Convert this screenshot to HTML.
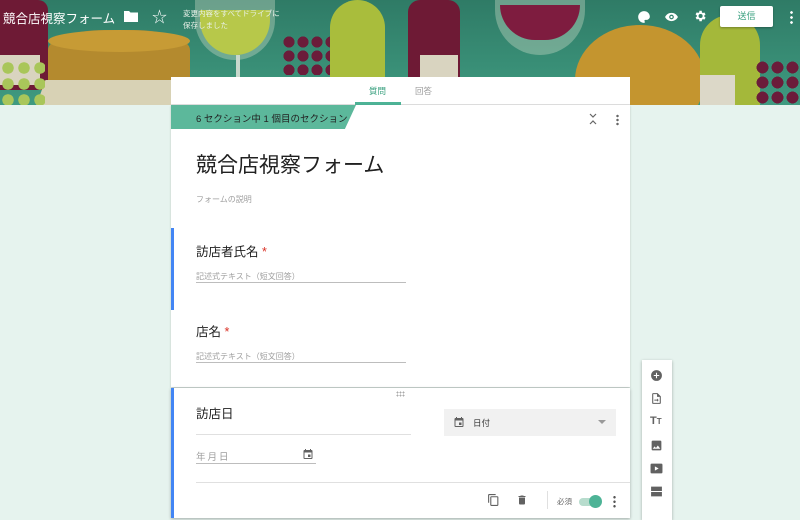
<!DOCTYPE html>
<html><head><meta charset="utf-8"><style>
*{margin:0;padding:0;box-sizing:border-box}
body{width:800px;height:509px;overflow:hidden;background:#e6f3ee;font-family:"Liberation Sans","Noto Sans CJK JP",sans-serif;position:relative}
.hdr{position:absolute;left:0;top:0;width:800px;height:105px;background:linear-gradient(180deg,#2f7b66,#3f9a80);overflow:hidden}
.abs{position:absolute}
.card{position:absolute;background:#fff;left:171px;width:459px}
.ic{fill:#fff}
.g{fill:#616161}
</style></head><body>
<div class="hdr">
 <div class="abs" style="left:-10px;top:0;width:58px;height:90px;background:#6e1a35;border-radius:10px 10px 0 0"></div>
 <div class="abs" style="left:0;top:55px;width:40px;height:30px;background:#d9d4c0"></div>
 <div class="abs" style="left:48px;top:30px;width:142px;height:80px;background:#b48a2e;border-radius:40% 40% 0 0/25% 25% 0 0"></div>
 <div class="abs" style="left:48px;top:30px;width:142px;height:22px;background:#c79b35;border-radius:50%"></div>
 <div class="abs" style="left:40px;top:80px;width:140px;height:30px;background:#d8d2b5;transform:skewX(-20deg)"></div>
 <div class="abs" style="left:0;top:60px;width:45px;height:45px;background:radial-gradient(circle,#a9c65a 50%,transparent 52%) 0 0/16px 16px"></div>
 <div class="abs" style="left:195px;top:0;width:80px;height:60px;background:rgba(220,230,210,.35);border-radius:0 0 40px 40px"></div>
 <div class="abs" style="left:200px;top:10px;width:70px;height:45px;background:#b7c84a;border-radius:0 0 35px 35px"></div>
 <div class="abs" style="left:236px;top:55px;width:4px;height:50px;background:#c8d8cc"></div>
 <div class="abs" style="left:282px;top:35px;width:55px;height:40px;background:radial-gradient(circle,#6b1c3a 55%,transparent 57%) 0 0/14px 14px"></div>
 <div class="abs" style="left:330px;top:0;width:55px;height:90px;background:#a9bd3c;border-radius:30px 30px 0 0"></div>
 <div class="abs" style="left:408px;top:0;width:52px;height:80px;background:#6e1a35;border-radius:12px 12px 0 0"></div>
 <div class="abs" style="left:420px;top:55px;width:38px;height:25px;background:#d9d4c0"></div>
 <div class="abs" style="left:495px;top:0;width:90px;height:55px;background:rgba(220,230,210,.35);border-radius:0 0 45px 45px"></div>
 <div class="abs" style="left:500px;top:5px;width:80px;height:35px;background:#7e1c3f;border-radius:0 0 40px 40px"></div>
 <div class="abs" style="left:575px;top:25px;width:130px;height:110px;background:#c4952f;border-radius:50%"></div>
 <div class="abs" style="left:700px;top:15px;width:60px;height:90px;background:#a4b83a;border-radius:30px 30px 0 0"></div>
 <div class="abs" style="left:700px;top:75px;width:35px;height:30px;background:#dcd8c8"></div>
 <div class="abs" style="left:755px;top:60px;width:45px;height:45px;background:radial-gradient(circle,#6b1c3a 55%,transparent 57%) 0 0/15px 15px"></div>
 <div class="abs" style="left:3px;top:8px;color:#fff;font-size:12.5px;white-space:nowrap">競合店視察フォーム</div>
 <svg class="abs" style="left:124px;top:10px" width="14" height="12" viewBox="0 0 14 12"><path class="ic" d="M0 1h5l1.5 1.5H14V12H0z"/></svg>
 <div class="abs" style="left:152px;top:6px;color:#fff;font-size:15px">☆</div>
 <div class="abs" style="left:183px;top:8px;color:#e8f0e8;font-size:7.5px;line-height:12px">変更内容をすべてドライブに<br>保存しました</div>
 <svg class="abs" style="left:637px;top:10px" width="14" height="14" viewBox="0 0 24 24"><path class="ic" d="M12 2C6.5 2 2 6.5 2 12s4.5 10 10 10c1 0 1.5-.7 1.5-1.5 0-.4-.2-.8-.4-1-.3-.3-.4-.6-.4-1 0-.8.7-1.5 1.5-1.5H16c3 0 6-2.5 6-5.5C22 6 17.5 2 12 2z"/></svg>
 <svg class="abs" style="left:664px;top:10px" width="15" height="14" viewBox="0 0 24 24"><path class="ic" d="M12 5C7 5 3 8 1 12c2 4 6 7 11 7s9-3 11-7c-2-4-6-7-11-7zm0 11a4 4 0 110-8 4 4 0 010 8zm0-6a2 2 0 100 4 2 2 0 000-4z"/></svg>
 <svg class="abs" style="left:693px;top:9px" width="14" height="14" viewBox="0 0 24 24"><path class="ic" d="M19.4 13a7.5 7.5 0 000-2l2.1-1.6-2-3.5-2.5 1a7 7 0 00-1.7-1L15 3h-4l-.4 2.7a7 7 0 00-1.7 1l-2.5-1-2 3.5L6.6 11a7.5 7.5 0 000 2l-2.1 1.6 2 3.5 2.5-1a7 7 0 001.7 1L11 21h4l.4-2.7a7 7 0 001.7-1l2.5 1 2-3.5zM13 15.5a3.5 3.5 0 110-7 3.5 3.5 0 010 7z"/></svg>
 <div class="abs" style="left:720px;top:6px;width:53px;height:21px;background:#fff;border-radius:2px;box-shadow:0 1px 2px rgba(0,0,0,.3);color:#3aa07f;font-size:9px;text-align:center;line-height:21px">送信</div>
 <div class="abs" style="left:790px;top:10px;width:3px;height:14px;background:radial-gradient(circle,#fff 1.2px,transparent 1.5px) 0 0/3px 5px"></div>
</div>

<div class="card" style="top:77px;height:28px;border-bottom:1px solid #e0e0e0">
 <div class="abs" style="left:198px;top:8px;font-size:8.5px;color:#3aa07f">質問</div>
 <div class="abs" style="left:184px;top:25px;width:46px;height:3px;background:#4db396"></div>
 <div class="abs" style="left:244px;top:8px;font-size:8.5px;color:#9e9e9e">回答</div>
</div>
<div class="card" style="top:105px;height:282px;box-shadow:0 1px 2px rgba(0,0,0,.2)">
 <div class="abs" style="left:0;top:0;width:185px;height:24px;background:#5cb89b;clip-path:polygon(0 0,100% 0,94% 100%,0 100%)"></div>
 <div class="abs" style="left:25px;top:6px;font-size:9.5px;color:#222">6 セクション中 1 個目のセクション</div>
 <svg class="abs" style="left:418px;top:8px" width="8" height="12" viewBox="0 0 8 12"><path d="M1 1l3 3 3-3M1 11l3-3 3 3" fill="none" stroke="#666" stroke-width="1.2"/></svg>
 <div class="abs" style="left:445px;top:9px;width:3px;height:12px;background:radial-gradient(circle,#666 1.1px,transparent 1.4px) 0 0/3px 4px"></div>
 <div class="abs" style="left:25px;top:44px;font-size:21px;color:#212121">競合店視察フォーム</div>
 <div class="abs" style="left:25px;top:89px;font-size:8px;color:#9e9e9e">フォームの説明</div>
 <div class="abs" style="left:0;top:123px;width:3px;height:82px;background:#4285f4"></div>
 <div class="abs" style="left:25px;top:136px;font-size:12.5px;color:#212121">訪店者氏名 <span style="color:#d93025">*</span></div>
 <div class="abs" style="left:25px;top:166px;font-size:8px;color:#9e9e9e">記述式テキスト（短文回答）</div>
 <div class="abs" style="left:25px;top:177px;width:210px;height:1px;background:#bdbdbd"></div>
 <div class="abs" style="left:25px;top:216px;font-size:12.5px;color:#212121">店名 <span style="color:#d93025">*</span></div>
 <div class="abs" style="left:25px;top:246px;font-size:8px;color:#9e9e9e">記述式テキスト（短文回答）</div>
 <div class="abs" style="left:25px;top:257px;width:210px;height:1px;background:#bdbdbd"></div>
</div>
<div class="card" style="top:388px;height:130px;box-shadow:0 1px 3px rgba(0,0,0,.3)">
 <div class="abs" style="left:0;top:0;width:3px;height:130px;background:#4285f4"></div>
 <div class="abs" style="left:225px;top:3px;width:9px;height:6px;background:radial-gradient(circle,#aaa .8px,transparent 1px) 0 0/3px 3px"></div>
 <div class="abs" style="left:25px;top:15px;font-size:12.5px;color:#212121">訪店日</div>
 <div class="abs" style="left:25px;top:46px;width:215px;height:1px;background:#e0e0e0"></div>
 <div class="abs" style="left:273px;top:21px;width:172px;height:27px;background:#f1f1f1"></div>
 <svg class="abs" style="left:282px;top:28px" width="12" height="12" viewBox="0 0 24 24"><path class="g" d="M19 4h-1V2h-2v2H8V2H6v2H5a2 2 0 00-2 2v14a2 2 0 002 2h14a2 2 0 002-2V6a2 2 0 00-2-2zm0 16H5V9h14zM12 13h5v5h-5z"/></svg>
 <div class="abs" style="left:302px;top:29px;font-size:8.5px;color:#333">日付</div>
 <div class="abs" style="left:427px;top:32px;border:4px solid transparent;border-top-color:#999"></div>
 <div class="abs" style="left:25px;top:61px;font-size:9.5px;color:#9e9e9e;letter-spacing:2px">年月日</div>
 <svg class="abs" style="left:131px;top:60px" width="12" height="12" viewBox="0 0 24 24"><path class="g" d="M19 4h-1V2h-2v2H8V2H6v2H5a2 2 0 00-2 2v14a2 2 0 002 2h14a2 2 0 002-2V6a2 2 0 00-2-2zm0 16H5V9h14zM12 13h5v5h-5z"/></svg>
 <div class="abs" style="left:25px;top:75px;width:120px;height:1px;background:#bdbdbd"></div>
 <div class="abs" style="left:25px;top:94px;width:434px;height:1px;background:#e0e0e0"></div>
 <svg class="abs" style="left:316px;top:105px" width="13" height="14" viewBox="0 0 24 24"><path class="g" d="M16 1H4a2 2 0 00-2 2v14h2V3h12zm3 4H8a2 2 0 00-2 2v14a2 2 0 002 2h11a2 2 0 002-2V7a2 2 0 00-2-2zm0 16H8V7h11z"/></svg>
 <svg class="abs" style="left:345px;top:105px" width="12" height="14" viewBox="0 0 24 24"><path class="g" d="M6 19a2 2 0 002 2h8a2 2 0 002-2V7H6zM19 4h-3.5l-1-1h-5l-1 1H5v2h14z"/></svg>
 <div class="abs" style="left:376px;top:103px;width:1px;height:18px;background:#e0e0e0"></div>
 <div class="abs" style="left:386px;top:108px;font-size:7.5px;color:#666">必須</div>
 <div class="abs" style="left:408px;top:110px;width:22px;height:8px;border-radius:4px;background:#b7dccd"></div>
 <div class="abs" style="left:418px;top:107px;width:13px;height:13px;border-radius:50%;background:#4db396"></div>
 <div class="abs" style="left:442px;top:107px;width:3px;height:13px;background:radial-gradient(circle,#555 1.1px,transparent 1.4px) 0 0/3px 4.5px"></div>
</div>
<div class="abs" style="left:642px;top:360px;width:30px;height:160px;background:#fff;box-shadow:0 1px 3px rgba(0,0,0,.3)">
 <svg class="abs" style="left:8px;top:9px" width="13" height="13" viewBox="0 0 24 24"><path class="g" d="M12 2a10 10 0 100 20 10 10 0 000-20zm5 11h-4v4h-2v-4H7v-2h4V7h2v4h4z"/></svg>
 <svg class="abs" style="left:8px;top:32px" width="13" height="13" viewBox="0 0 24 24"><path class="g" d="M14 2H6a2 2 0 00-2 2v16a2 2 0 002 2h12a2 2 0 002-2V8zm4 18H6V4h7v5h5zM8 14h5v-2l3 3-3 3v-2H8z"/></svg>
 <div class="abs" style="left:8px;top:55px;font-size:11px;font-weight:bold;color:#616161">T<span style="font-size:8px">T</span></div>
 <svg class="abs" style="left:8px;top:79px" width="13" height="13" viewBox="0 0 24 24"><path class="g" d="M21 19V5a2 2 0 00-2-2H5a2 2 0 00-2 2v14a2 2 0 002 2h14a2 2 0 002-2zM8.5 13.5l2.5 3 3.5-4.5 4.5 6H5z"/></svg>
 <svg class="abs" style="left:8px;top:102px" width="13" height="13" viewBox="0 0 24 24"><path class="g" d="M21 3H3a2 2 0 00-2 2v14a2 2 0 002 2h18a2 2 0 002-2V5a2 2 0 00-2-2zM9 16V8l7 4z"/></svg>
 <svg class="abs" style="left:8px;top:125px" width="13" height="13" viewBox="0 0 24 24"><path class="g" d="M2 3h20v8H2zM2 13h20v8H2z"/></svg>
</div>
</body></html>
